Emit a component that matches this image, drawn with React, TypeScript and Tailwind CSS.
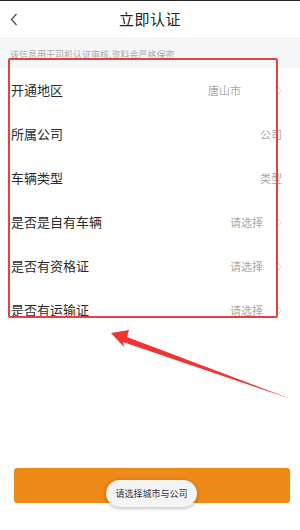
import React from 'react';

type Row = { label: string; value: string; valueClass: string; arrow: boolean };

const ROWS: Row[] = [
  { label: '开通地区', value: '唐山市', valueClass: 'mr-[36px]', arrow: true },
  { label: '所属公司', value: '公司', valueClass: 'mr-[-5px]', arrow: false },
  { label: '车辆类型', value: '类型', valueClass: 'mr-[-5px]', arrow: false },
  { label: '是否是自有车辆', value: '请选择', valueClass: 'mr-[14px]', arrow: true },
  { label: '是否有资格证', value: '请选择', valueClass: 'mr-[14px]', arrow: true },
  { label: '是否有运输证', value: '请选择', valueClass: 'mr-[14px]', arrow: true },
];

const Chevron = () => (
  <svg width="5" height="9" viewBox="0 0 5 9" fill="none">
    <path d="M0.5 0.5L4.5 4.5L0.5 8.5" stroke="#d4d4d4" strokeWidth="1" />
  </svg>
);

const App: React.FC = () => {
  return (
    <div
      className="relative w-[300px] h-[530px] bg-white overflow-hidden"
      style={{ fontFamily: '"Noto Sans CJK SC", "Noto Sans", sans-serif' }}
    >
      <div className="h-[1px] bg-[#2a2a2a]" />

      {/* 顶部导航 */}
      <div className="relative h-[36px] flex items-center justify-center">
        <svg className="absolute left-[10px] top-[12px]" width="8" height="13" viewBox="0 0 8 13" fill="none">
          <path d="M6.5 1L1.5 6.5L6.5 12" stroke="#444" strokeWidth="1.2" />
        </svg>
        <span className="text-[15px] text-[#222] tracking-[0.5px]">立即认证</span>
      </div>

      <div className="h-[31px] bg-[#f5f6f8] px-[10px] pt-[12px]">
        <p className="text-[9px] leading-[12px] text-[#a8a8a8]">该信息用于司机认证审核,资料会严格保密</p>
      </div>

      <div>
        {ROWS.map((row) => (
          <div key={row.label} className="h-[44px] flex items-center pl-[11px] pr-[18px]">
            <span className="text-[13px] text-[#2b2b2b]">{row.label}</span>
            <span className="flex-1" />
            <span className={`text-[11px] text-[#a9a9a9] ${row.valueClass}`}>{row.value}</span>
            <span className="w-[5px] flex items-center">{row.arrow && <Chevron />}</span>
          </div>
        ))}
      </div>

      {/* 底部按钮 */}
      <div className="absolute left-[14px] right-[10px] top-[468px] h-[35px] rounded-[3px] bg-[#ee8a17]" />

      {/* 提示 */}
      <div className="absolute left-[106px] top-[480px] w-[91px] h-[27px] rounded-full bg-[#f4f4f4] shadow-[0_1px_4px_rgba(0,0,0,0.3)] flex items-center justify-center">
        <span className="text-[9px] text-[#333]">请选择城市与公司</span>
      </div>

      {/* 标注框 */}
      <div className="absolute left-[8px] top-[58px] w-[270px] h-[260px] border-2 border-[#e8403f] rounded-[2px] pointer-events-none" />

      {/* 标注箭头 */}
      <svg className="absolute left-0 top-0 pointer-events-none" width="300" height="530" viewBox="0 0 300 530">
        <polygon points="111,333 129,330 127,337 291,399 123,342 124,347" fill="#f03434" />
      </svg>
    </div>
  );
};

export default App;
